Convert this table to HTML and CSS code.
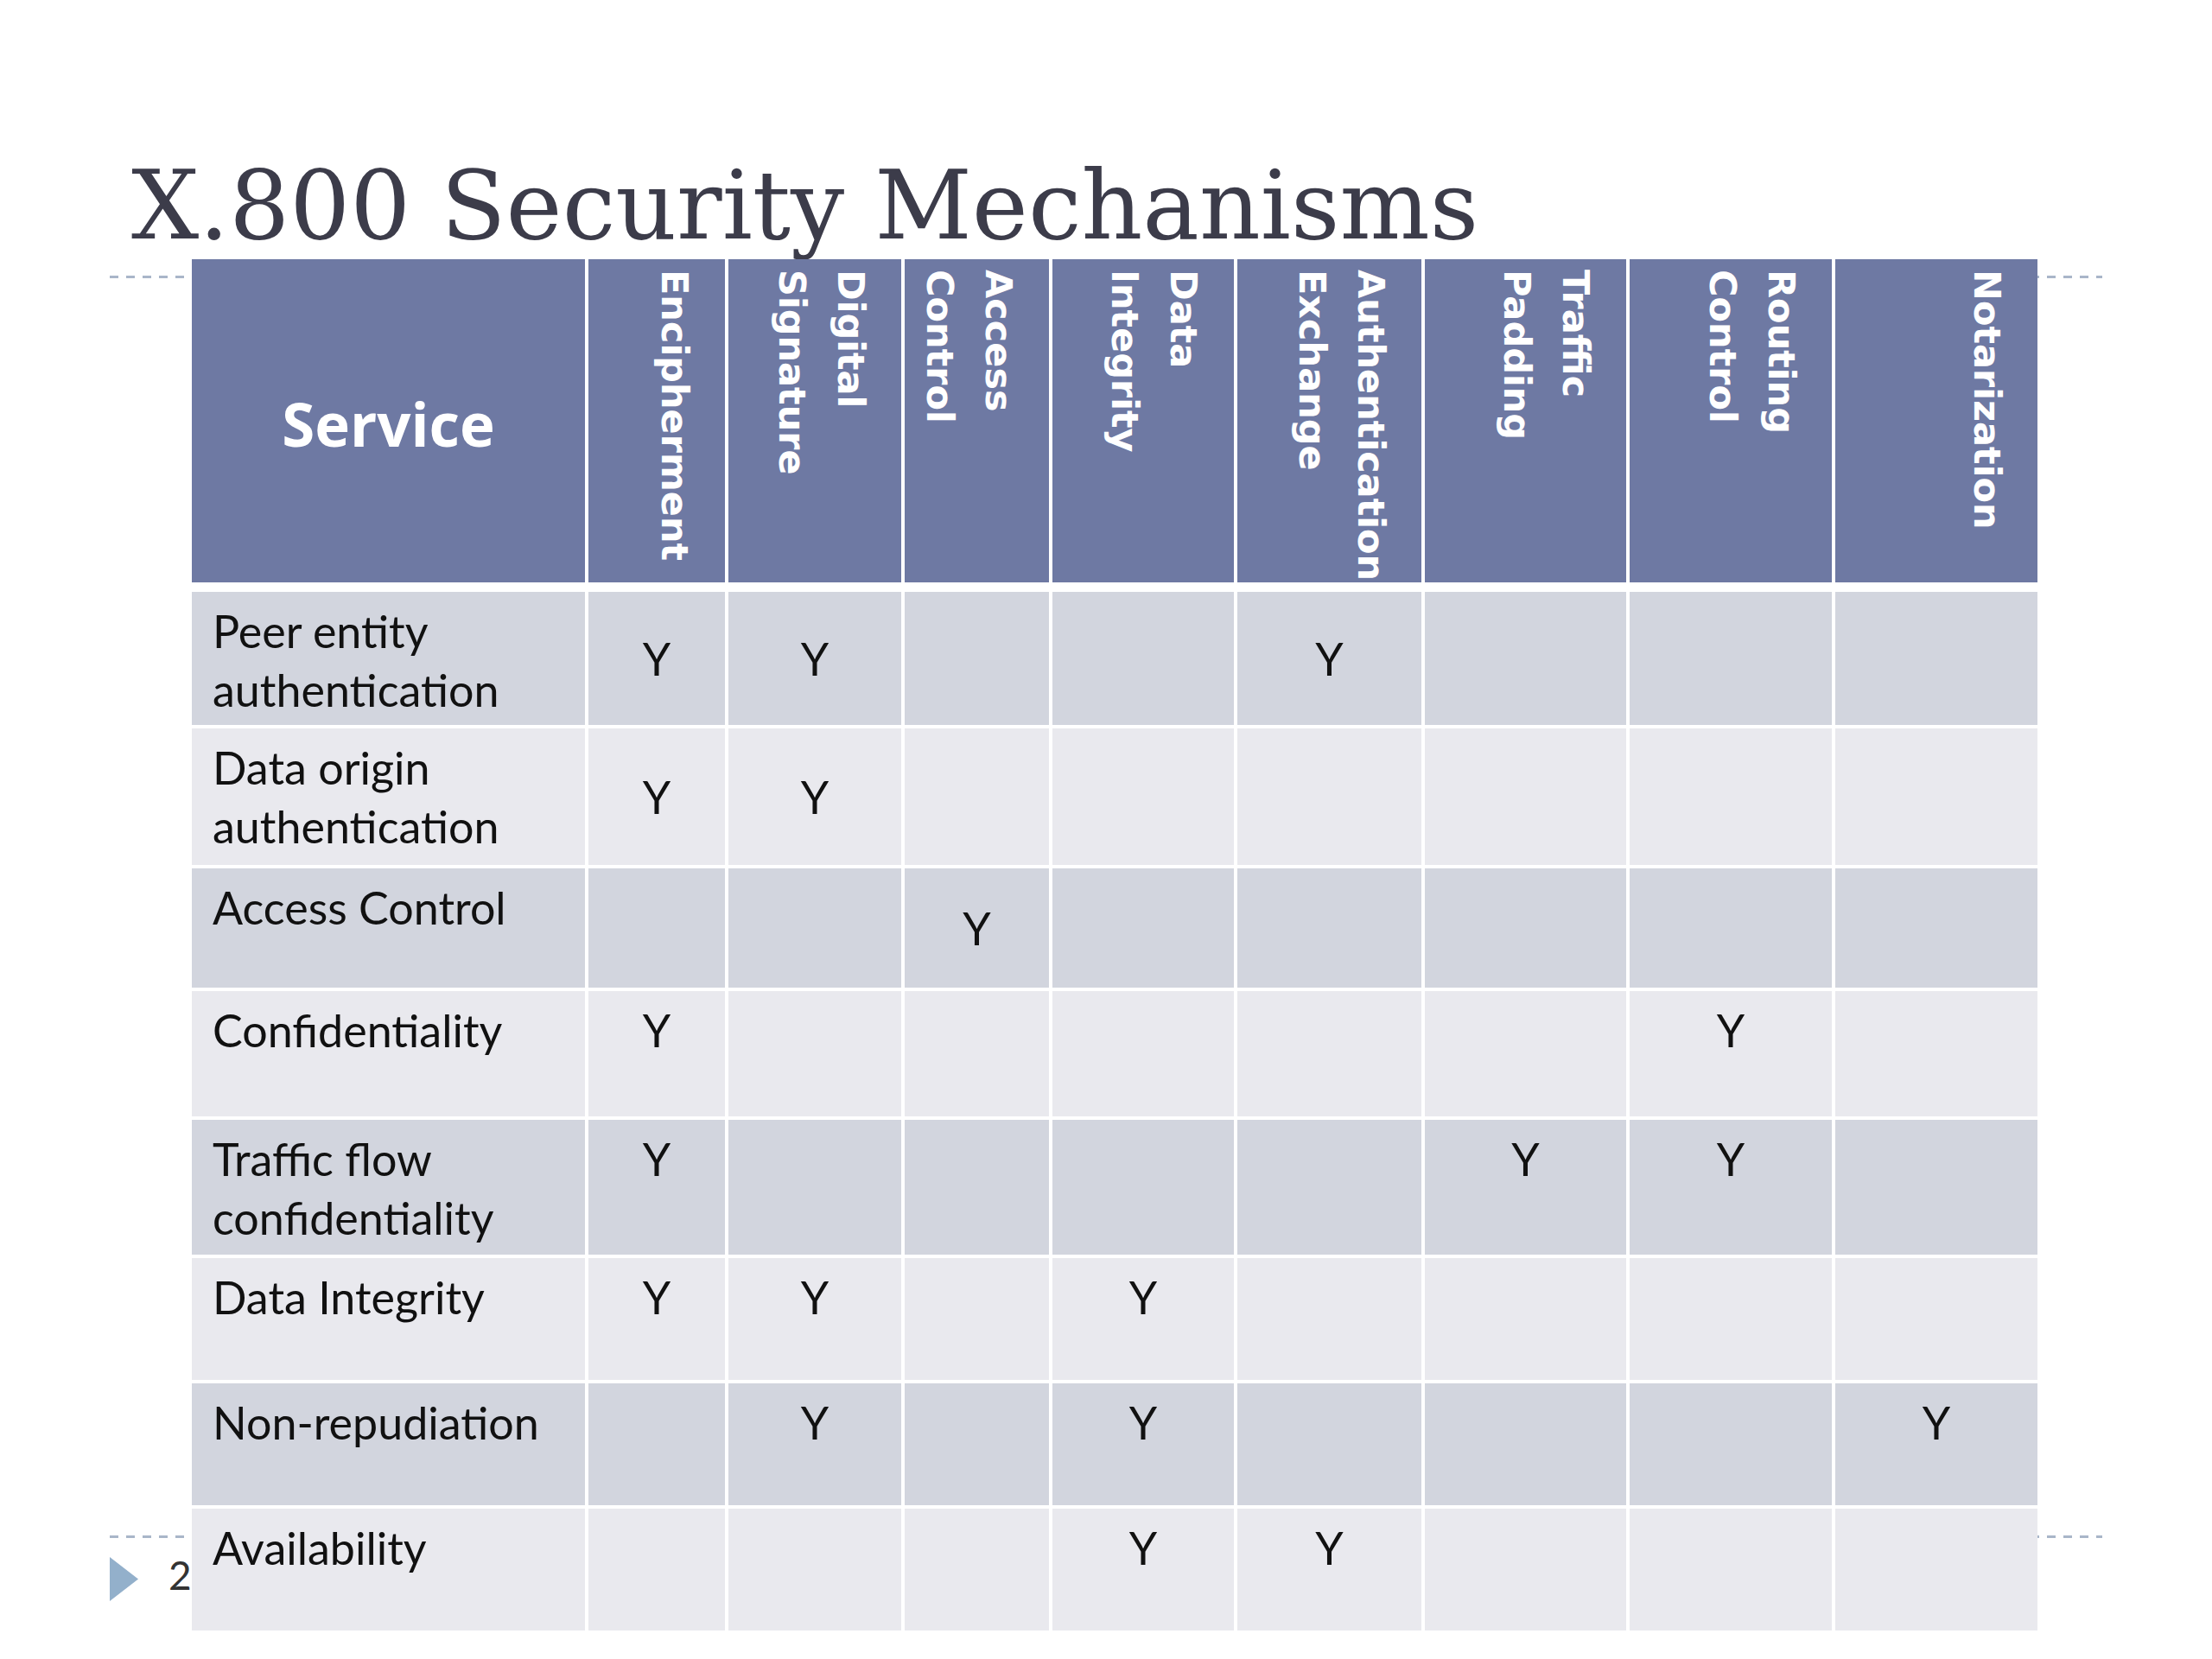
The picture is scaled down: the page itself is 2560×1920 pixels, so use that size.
FILE: index.html
```html
<!DOCTYPE html>
<html lang="en">
<head>
<meta charset="utf-8">
<title>X.800 Security Mechanisms</title>
<link rel="stylesheet" href="styles.css">
</head>
<body>
<div class="slide">
  <h1 class="title">X.800 Security Mechanisms</h1>
  <div class="main">
    <div class="gutter">
      <div class="footer">
        <svg class="tri" width="33" height="51" viewBox="0 0 33 51"><polygon points="0,0 33,25.5 0,51" fill="#93b0cb"/></svg>
        <span class="page-num">2</span>
      </div>
    </div>
    <div class="matrix">
      <div class="head">
        <div class="hcell service">Service</div>
        <div class="hcell vert">Encipherment</div>
        <div class="hcell vert">Digital<br>Signature</div>
        <div class="hcell vert">Access<br>Control</div>
        <div class="hcell vert">Data<br>Integrity</div>
        <div class="hcell vert">Authentication<br>Exchange</div>
        <div class="hcell vert">Traffic<br>Padding</div>
        <div class="hcell vert">Routing<br>Control</div>
        <div class="hcell vert">Notarization</div>
      </div>
      <div class="body">
        <div class="row odd mid">
          <div class="cell label">Peer entity authentication</div>
          <div class="cell y">Y</div><div class="cell y">Y</div><div class="cell y"></div><div class="cell y"></div><div class="cell y">Y</div><div class="cell y"></div><div class="cell y"></div><div class="cell y"></div>
        </div>
        <div class="row even mid">
          <div class="cell label">Data origin authentication</div>
          <div class="cell y">Y</div><div class="cell y">Y</div><div class="cell y"></div><div class="cell y"></div><div class="cell y"></div><div class="cell y"></div><div class="cell y"></div><div class="cell y"></div>
        </div>
        <div class="row odd mid">
          <div class="cell label">Access Control</div>
          <div class="cell y"></div><div class="cell y"></div><div class="cell y">Y</div><div class="cell y"></div><div class="cell y"></div><div class="cell y"></div><div class="cell y"></div><div class="cell y"></div>
        </div>
        <div class="row even top">
          <div class="cell label">Confidentiality</div>
          <div class="cell y">Y</div><div class="cell y"></div><div class="cell y"></div><div class="cell y"></div><div class="cell y"></div><div class="cell y"></div><div class="cell y">Y</div><div class="cell y"></div>
        </div>
        <div class="row odd top">
          <div class="cell label">Traffic flow confidentiality</div>
          <div class="cell y">Y</div><div class="cell y"></div><div class="cell y"></div><div class="cell y"></div><div class="cell y"></div><div class="cell y">Y</div><div class="cell y">Y</div><div class="cell y"></div>
        </div>
        <div class="row even top">
          <div class="cell label">Data Integrity</div>
          <div class="cell y">Y</div><div class="cell y">Y</div><div class="cell y"></div><div class="cell y">Y</div><div class="cell y"></div><div class="cell y"></div><div class="cell y"></div><div class="cell y"></div>
        </div>
        <div class="row odd top">
          <div class="cell label">Non-repudiation</div>
          <div class="cell y"></div><div class="cell y">Y</div><div class="cell y"></div><div class="cell y">Y</div><div class="cell y"></div><div class="cell y"></div><div class="cell y"></div><div class="cell y">Y</div>
        </div>
        <div class="row even top">
          <div class="cell label">Availability</div>
          <div class="cell y"></div><div class="cell y"></div><div class="cell y"></div><div class="cell y">Y</div><div class="cell y">Y</div><div class="cell y"></div><div class="cell y"></div><div class="cell y"></div>
        </div>
      </div>
    </div>
  </div>
</div>
</body>
</html>
```

FILE: styles.css
```css
* { box-sizing: border-box; }

html, body {
  margin: 0;
  padding: 0;
  background: #ffffff;
}

.slide {
  width: 2560px;
  height: 1920px;
  background-color: #ffffff;
  background-image:
    repeating-linear-gradient(90deg, #a9b6c9 0 10px, transparent 10px 19px),
    repeating-linear-gradient(90deg, #a9b6c9 0 10px, transparent 10px 19px);
  background-position: 127px 319px, 127px 1777px;
  background-size: 2306px 3px, 2306px 3px;
  background-repeat: no-repeat;
  overflow: hidden;
}

.title {
  margin: 0;
  padding: 178px 0 0 152px;
  height: 300px;
  font-family: "DejaVu Serif", serif;
  font-weight: normal;
  font-size: 110px;
  line-height: 120px;
  color: #3c3c4a;
  white-space: nowrap;
}

.main {
  display: flex;
}

.gutter {
  width: 222px;
  flex: none;
  display: flex;
  flex-direction: column;
  justify-content: flex-end;
  padding: 0 0 34px 127px;
}

.footer {
  display: flex;
  align-items: center;
  gap: 35px;
}

.tri { display: block; }

.page-num {
  font-family: Lato, "Liberation Sans", sans-serif;
  font-size: 46px;
  line-height: 51px;
  color: #333333;
  margin-top: -10px;
}

.matrix {
  width: 2136px;
  flex: none;
}

.head,
.body {
  display: grid;
  grid-template-columns: 455px 158px 200px 167px 210px 213px 233px 234px 234px;
  column-gap: 4px;
  background: #ffffff;
}

.head {
  grid-template-rows: 374px;
  margin-bottom: 11px;
}

.body {
  grid-template-rows: 154px 158px 138px 145px 156px 141px 141px 141px;
  row-gap: 4px;
}

.hcell {
  background: #6e79a3;
  color: #ffffff;
}

.service {
  display: flex;
  align-items: center;
  justify-content: center;
  font-family: "Open Sans", sans-serif;
  font-weight: 700;
  font-size: 69px;
  padding-top: 6px;
}

.vert {
  writing-mode: vertical-rl;
  font-family: "DejaVu Sans", sans-serif;
  font-weight: 700;
  font-size: 43px;
  line-height: 68px;
  padding: 12px 24px 0 0;
  white-space: nowrap;
  overflow: hidden;
}

.row { display: contents; }

.cell {
  font-family: Lato, "Liberation Sans", sans-serif;
  font-size: 52px;
  line-height: 68px;
  color: #111111;
  padding-top: 11px;
}

.odd .cell { background: #d2d5de; }
.even .cell { background: #e9e9ee; }

.label {
  padding-left: 24px;
  padding-right: 10px;
}

.y {
  display: flex;
  justify-content: center;
}

.mid .y {
  align-items: center;
  padding-top: 0;
}

.top .y {
  align-items: flex-start;
}
```
